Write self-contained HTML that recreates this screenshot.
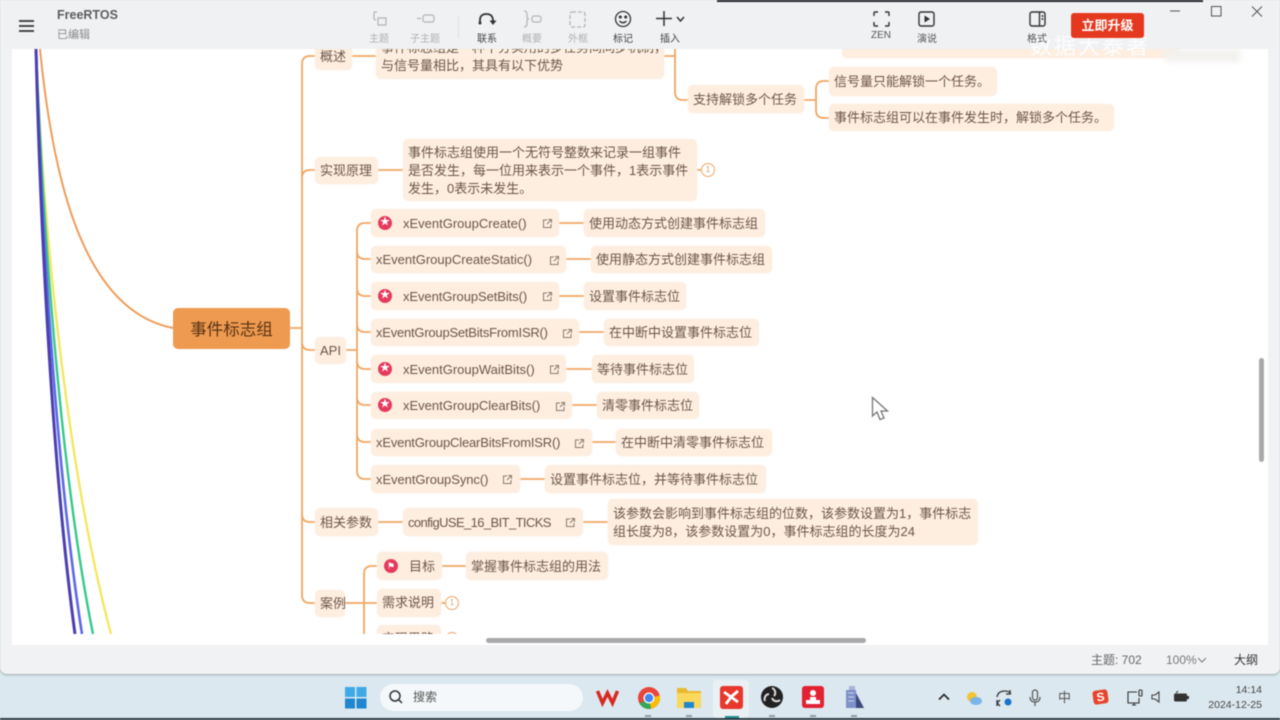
<!DOCTYPE html>
<html lang="zh"><head><meta charset="utf-8"><title>FreeRTOS</title>
<style>
*{box-sizing:border-box;margin:0;padding:0}
html,body{width:1280px;height:720px;overflow:hidden;background:#dbe8ef;font-family:"Liberation Sans","Noto Sans CJK SC",sans-serif}
body{filter:blur(.4px)}
.abs,.n,.t,.tb,.c{position:absolute}
#win{position:absolute;left:0;top:0;width:1280px;height:674px;background:#f1f2f4;border-radius:0 0 7px 7px;box-shadow:0 1px 2px #9aa;overflow:hidden}
#canvas{position:absolute;left:12px;top:49px;width:1256px;height:585px;background:#fff;overflow:hidden}
#white2{position:absolute;left:12px;top:634px;width:1256px;height:11px;background:#fff}
#stage{position:absolute;left:-12px;top:-49px;width:1280px;height:720px}
.n{background:#fdeee0;border-radius:5px;color:#6d5648;font-size:13px;white-space:nowrap;padding-left:5px;box-shadow:0 0 2px #fdf3ea}
.t{white-space:nowrap;color:#777;font-size:10px;text-align:center}
.c{width:14px;height:14px;border:1px solid #f0a560;border-radius:50%;background:#fff;color:#e79a5a;font-size:8px;line-height:12px;text-align:center}
svg{position:absolute;overflow:visible}
.star{position:absolute;width:14px;height:14px;border-radius:50%;background:#e63a5c;color:#fff;font-size:10px;line-height:14px;text-align:center}
.lk{position:absolute;width:11px;height:11px;top:50%;margin-top:-5px}
</style></head><body>
<div id="win">
<div id="canvas"><div id="stage">
<svg width="1280" height="720" style="left:0;top:0" fill="none">
<path d="M36 49C44 250 70 480 111 634" stroke="#f5e663" stroke-width="2.4"/>
<path d="M36 49C44 250 62 480 93 634" stroke="#35c98a" stroke-width="2.4"/>
<path d="M36 49C42 250 58 480 82 634" stroke="#5d68e8" stroke-width="2.6"/>
<path d="M36 49C41 250 54 480 75 634" stroke="#4a3fb0" stroke-width="3"/>
<path d="M40 49C52 170 80 310 173 328" stroke="#ee9d5a" stroke-width="2"/>
<g stroke="#f0a661" stroke-width="1.8">
<path d="M290 328H302M315 56H310Q302 56 302 64V595Q302 603 310 603H315M315 170H310Q302 170 302 178M302 342Q302 350 310 350H315M302 514Q302 522 310 522H315"/>
<path d="M352 56H376M664 56H675V92Q675 100 683 100H688M675 56V49"/>
<path d="M804 100H816M829 81H824Q816 81 816 89V110Q816 118 824 118H829"/>
<path d="M378 170H403M697 170H701"/>
<path d="M346 350H357M371 223H365Q357 223 357 231V471Q357 479 365 479H371M357 251Q357 259 365 259H371M357 288Q357 296 365 296H371M357 324Q357 332 365 332H371M357 361Q357 369 365 369H371M357 397Q357 405 365 405H371M357 434Q357 442 365 442H371"/>
<path d="M559 223H584M566 259H591M559 296H584M579 332H605M566 369H592M572 405H597M592 442H616M520 479H545"/>
<path d="M378 522H403M583 522H608"/>
<path d="M345 603H377M377 566H372Q364 566 364 574V634M442 566H466M441 603H445"/>
</g>
</svg>
<div class="n" style="left:842px;top:40px;width:338px;height:18px;line-height:14px;padding-left:6px;font-size:12px;color:#a08c7e"></div>
<div class="n" style="left:315px;top:43px;width:37px;height:27px;line-height:27px">概述</div>
<div class="n" style="left:376px;top:35px;width:288px;height:44px;line-height:18px;padding-top:4px">事件标志组是一种十分实用的多任务间同步机制，<br>与信号量相比，其具有以下优势</div>
<div class="n" style="left:688px;top:85px;width:116px;height:28px;line-height:30px">支持解锁多个任务</div>
<div class="n" style="left:829px;top:67px;width:168px;height:29px;line-height:29px">信号量只能解锁一个任务。</div>
<div class="n" style="left:829px;top:104px;width:285px;height:27px;line-height:27px">事件标志组可以在事件发生时，解锁多个任务。</div>
<div class="n" style="left:315px;top:157px;width:63px;height:27px;line-height:27px">实现原理</div>
<div class="n" style="left:403px;top:139px;width:294px;height:62px;line-height:18px;padding-top:5px">事件标志组使用一个无符号整数来记录一组事件<br>是否发生，每一位用来表示一个事件，1表示事件<br>发生，0表示未发生。</div>
<div class="c" style="left:701px;top:163px">1</div>
<div class="n" style="left:173px;top:308px;width:117px;height:41px;line-height:44px;background:#ee9a50;color:#5a3213;font-size:16.5px;text-align:center;padding:0;box-shadow:none">事件标志组</div>
<div class="n" style="left:315px;top:337px;width:31px;height:27px;line-height:27px">API</div>

<div class="n" style="left:371px;top:209px;width:188px;height:28px;line-height:30px;padding-left:32px">xEventGroupCreate()<div class="star" style="left:7px;top:7px">★</div><svg class="lk" style="left:171px" viewBox="0 0 11 11" fill="none" stroke="#8a7a70"><path d="M5 2H1.500V9.500H9V6M6 1.500H9.500V5M9.500 1.500L5 6"/></svg></div>
<div class="n" style="left:371px;top:246px;width:195px;height:27px;line-height:27px">xEventGroupCreateStatic()<svg class="lk" style="left:178px" viewBox="0 0 11 11" fill="none" stroke="#8a7a70"><path d="M5 2H1.500V9.500H9V6M6 1.500H9.500V5M9.500 1.500L5 6"/></svg></div>
<div class="n" style="left:371px;top:282px;width:188px;height:28px;line-height:30px;padding-left:32px;letter-spacing:-.08px">xEventGroupSetBits()<div class="star" style="left:7px;top:7px">★</div><svg class="lk" style="left:171px" viewBox="0 0 11 11" fill="none" stroke="#8a7a70"><path d="M5 2H1.500V9.500H9V6M6 1.500H9.500V5M9.500 1.500L5 6"/></svg></div>
<div class="n" style="left:371px;top:319px;width:208px;height:27px;line-height:27px;letter-spacing:-.22px">xEventGroupSetBitsFromISR()<svg class="lk" style="left:191px" viewBox="0 0 11 11" fill="none" stroke="#8a7a70"><path d="M5 2H1.500V9.500H9V6M6 1.500H9.500V5M9.500 1.500L5 6"/></svg></div>
<div class="n" style="left:371px;top:355px;width:195px;height:28px;line-height:30px;padding-left:32px">xEventGroupWaitBits()<div class="star" style="left:7px;top:7px">★</div><svg class="lk" style="left:178px" viewBox="0 0 11 11" fill="none" stroke="#8a7a70"><path d="M5 2H1.500V9.500H9V6M6 1.500H9.500V5M9.500 1.500L5 6"/></svg></div>
<div class="n" style="left:371px;top:392px;width:201px;height:27px;line-height:28px;padding-left:32px">xEventGroupClearBits()<div class="star" style="left:7px;top:6px">★</div><svg class="lk" style="left:184px" viewBox="0 0 11 11" fill="none" stroke="#8a7a70"><path d="M5 2H1.500V9.500H9V6M6 1.500H9.500V5M9.500 1.500L5 6"/></svg></div>
<div class="n" style="left:371px;top:429px;width:221px;height:27px;line-height:27px;letter-spacing:-.17px">xEventGroupClearBitsFromISR()<svg class="lk" style="left:203px" viewBox="0 0 11 11" fill="none" stroke="#8a7a70"><path d="M5 2H1.500V9.500H9V6M6 1.500H9.500V5M9.500 1.500L5 6"/></svg></div>
<div class="n" style="left:371px;top:465px;width:149px;height:28px;line-height:30px;letter-spacing:-.06px">xEventGroupSync()<svg class="lk" style="left:131px" viewBox="0 0 11 11" fill="none" stroke="#8a7a70"><path d="M5 2H1.500V9.500H9V6M6 1.500H9.500V5M9.500 1.500L5 6"/></svg></div>

<div class="n" style="left:584px;top:209px;width:181px;height:28px;line-height:30px">使用动态方式创建事件标志组</div>
<div class="n" style="left:591px;top:246px;width:181px;height:27px;line-height:27px">使用静态方式创建事件标志组</div>
<div class="n" style="left:584px;top:282px;width:102px;height:28px;line-height:30px">设置事件标志位</div>
<div class="n" style="left:604px;top:319px;width:155px;height:27px;line-height:27px">在中断中设置事件标志位</div>
<div class="n" style="left:592px;top:355px;width:102px;height:28px;line-height:30px">等待事件标志位</div>
<div class="n" style="left:597px;top:392px;width:102px;height:27px;line-height:28px">清零事件标志位</div>
<div class="n" style="left:616px;top:429px;width:156px;height:27px;line-height:27px">在中断中清零事件标志位</div>
<div class="n" style="left:545px;top:465px;width:221px;height:28px;line-height:30px">设置事件标志位，并等待事件标志位</div>

<div class="n" style="left:315px;top:508px;width:63px;height:28px;line-height:30px">相关参数</div>
<div class="n" style="left:403px;top:508px;width:180px;height:28px;line-height:30px;letter-spacing:-.6px">configUSE_16_BIT_TICKS<svg class="lk" style="left:162px" viewBox="0 0 11 11" fill="none" stroke="#8a7a70"><path d="M5 2H1.500V9.500H9V6M6 1.500H9.500V5M9.500 1.500L5 6"/></svg></div>
<div class="n" style="left:608px;top:499px;width:370px;height:46px;line-height:18px;padding-top:6px">该参数会影响到事件标志组的位数，该参数设置为1，事件标志<br>组长度为8，该参数设置为0，事件标志组的长度为24</div>
<div class="n" style="left:315px;top:590px;width:30px;height:27px;line-height:27px">案例</div>
<div class="n" style="left:377px;top:552px;width:65px;height:28px;line-height:29px;padding-left:32px">目标<div class="star" style="left:7px;top:7px;font-size:9px">⚑</div></div>
<div class="n" style="left:466px;top:552px;width:142px;height:28px;line-height:29px">掌握事件标志组的用法</div>
<div class="n" style="left:377px;top:589px;width:64px;height:28px;line-height:28px">需求说明</div>
<div class="c" style="left:445px;top:596px">1</div>
<div class="n" style="left:377px;top:625px;width:64px;height:28px;line-height:28px">实现思路</div>
<div class="c" style="left:445px;top:632px">1</div>
<svg width="20" height="26" style="left:871px;top:396px" viewBox="0 0 20 26"><path d="M1.500 1.500V20L6 16L9 23.500L13 22L10 15H16.500Z" fill="#fff" stroke="#77777b" stroke-width="1.300"/></svg>
</div></div>
<div id="white2"></div>
<div class="abs" style="left:486px;top:638px;width:380px;height:5px;background:#a9a9ab;border-radius:3px"></div>
<div class="abs" style="left:1259px;top:358px;width:5px;height:104px;background:#a9a9ab;border-radius:3px"></div>
<div class="abs" style="left:0;top:0;width:1280px;height:49px;background:#f0f1f3"></div>
<div class="abs" style="left:717px;top:0;width:486px;height:2px;background:#22242a"></div>
<div class="abs" style="left:842px;top:49px;width:190px;height:9px;background:#fdeee0;border-radius:0 0 5px 5px"></div>
<div class="abs" style="left:1165px;top:49px;width:75px;height:13px;background:#f3f1ee;filter:blur(3px)"></div>
<div class="abs" style="left:1030px;top:33px;color:#fff;font-size:22px;letter-spacing:2px;white-space:nowrap;height:28px;line-height:28px;opacity:.9">数据大泰著</div>

<svg width="16" height="12" style="left:19px;top:20px" stroke="#333" stroke-width="1.700"><path d="M0 1H15M0 6H15M0 11H15"/></svg>
<div class="abs" style="left:57px;top:8px;font-size:12.500px;color:#444;line-height:15px;font-weight:bold;opacity:.85">FreeRTOS</div>
<div class="abs" style="left:57px;top:28px;font-size:11px;color:#888;line-height:14px">已编辑</div>

<svg width="16" height="16" style="left:372px;top:11px" fill="none" stroke="#b4b4b8" stroke-width="1.200"><path d="M2 1V7Q2 9 4 9M6 7H14V14H6ZM2 1H5"/></svg>
<div class="t" style="left:364px;top:30px;width:30px;color:#b0b0b4">主题</div>
<svg width="20" height="12" style="left:416px;top:13px" fill="none" stroke="#b4b4b8" stroke-width="1.200"><rect x="7" y="2" width="11" height="7" rx="2"/><path d="M1 5.500H5"/></svg>
<div class="t" style="left:405px;top:30px;width:40px;color:#b0b0b4">子主题</div>
<div class="abs" style="left:458px;top:16px;width:1px;height:22px;background:#dfdfe2"></div>
<svg width="20" height="16" style="left:477px;top:11px" fill="none" stroke="#333" stroke-width="1.800"><path d="M3 12V9Q3 3 9.500 3Q16 3 16 10"/><path d="M12.500 9.500H19.500L16 14Z" fill="#333" stroke="none"/><circle cx="3" cy="12" r="1.500" fill="#333" stroke="none"/></svg>
<div class="t" style="left:472px;top:30px;width:30px;color:#444">联系</div>
<svg width="20" height="18" style="left:523px;top:10px" fill="none" stroke="#b4b4b8" stroke-width="1.200"><path d="M1 1Q4 1 4 4V7Q4 9 6 9Q4 9 4 11V14Q4 17 1 17"/><rect x="9" y="6" width="9" height="6" rx="2"/></svg>
<div class="t" style="left:517px;top:30px;width:30px;color:#b0b0b4">概要</div>
<svg width="18" height="17" style="left:569px;top:11px" fill="none" stroke="#b4b4b8" stroke-width="1.300" stroke-dasharray="4 2"><rect x="1" y="1" width="15" height="15" rx="2"/></svg>
<div class="t" style="left:563px;top:30px;width:30px;color:#b0b0b4">外框</div>
<svg width="18" height="18" style="left:614px;top:10px" fill="none" stroke="#333" stroke-width="1.300"><circle cx="9" cy="9" r="7.500"/><circle cx="6.300" cy="7" r=".9" fill="#333"/><circle cx="11.700" cy="7" r=".9" fill="#333"/><path d="M5.500 11Q9 14.500 12.500 11"/></svg>
<div class="t" style="left:608px;top:30px;width:30px;color:#444">标记</div>
<svg width="30" height="16" style="left:656px;top:11px" fill="none" stroke="#333" stroke-width="1.500"><path d="M8 0V15M0 7.500H16"/><path d="M21 6L24.500 10L28 6"/></svg>
<div class="t" style="left:655px;top:30px;width:30px;color:#444">插入</div>

<svg width="18" height="16" style="left:873px;top:11px" fill="none" stroke="#333" stroke-width="1.400"><path d="M1 5V2Q1 1 2 1H5M12 1H15Q16 1 16 2V5M16 11V14Q16 15 15 15H12M5 15H2Q1 15 1 14V11"/></svg>
<div class="t" style="left:866px;top:30px;width:30px;color:#555">ZEN</div>
<svg width="18" height="16" style="left:918px;top:11px" fill="none" stroke="#333" stroke-width="1.400"><rect x="1" y="1" width="15" height="14" rx="2"/><path d="M6.500 4.500L12 8L6.500 11.500Z" fill="#333" stroke="none"/></svg>
<div class="t" style="left:912px;top:30px;width:30px;color:#555">演说</div>
<svg width="18" height="16" style="left:1029px;top:11px" fill="none" stroke="#333" stroke-width="1.400"><rect x="1" y="1" width="15" height="14" rx="2"/><path d="M10.500 1V15M12.500 5H14.500M12.500 8H14.500"/></svg>
<div class="t" style="left:1022px;top:30px;width:30px;color:#555">格式</div>
<div class="abs" style="left:1071px;top:13px;width:73px;height:25px;background:#e5391f;border-radius:3px;color:#fff;font-size:13px;font-weight:bold;text-align:center;line-height:26px">立即升级</div>
<svg width="100" height="14" style="left:1170px;top:5px" fill="none" stroke="#555" stroke-width="1"><path d="M0 6H10M41.500 1.500H51V11H41.500ZM82 1.500L92 11.500M92 1.500L82 11.500"/></svg>

<div class="t" style="left:1091px;top:653px;font-size:12px;color:#666;line-height:15px">主题: 702</div>
<div class="t" style="left:1166px;top:653px;font-size:12px;color:#777;line-height:15px">100%</div>
<svg width="10" height="6" style="left:1197px;top:657px" fill="none" stroke="#777"><path d="M1 1L5 5L9 1"/></svg>
<div class="t" style="left:1234px;top:653px;font-size:12px;color:#333;line-height:15px">大纲</div>
</div>

<div class="abs" style="left:0;top:718px;width:1280px;height:2px;background:#2b3b42"></div>
<svg width="22" height="22" style="left:345px;top:687px"><path d="M0 0H10V10H0Z" fill="#3fa9e6"/><path d="M11.500 0H21.500V10H11.500Z" fill="#3fa9e6"/><path d="M0 11.500H10V21.500H0Z" fill="#1f86cf"/><path d="M11.500 11.500H21.500V21.500H11.500Z" fill="#1f86cf"/></svg>
<div class="abs" style="left:380px;top:684px;width:203px;height:27px;background:#f4f8fa;border-radius:14px"></div>
<svg width="16" height="16" style="left:388px;top:689px" fill="none" stroke="#333" stroke-width="1.500"><circle cx="7" cy="7" r="5"/><path d="M10.500 10.500L14 14"/></svg>
<div class="abs" style="left:413px;top:689px;font-size:12px;color:#555;line-height:16px">搜索</div>
<svg width="24" height="18" style="left:596px;top:688px" fill="none" stroke="#d9291f" stroke-width="3.500"><path d="M1.500 3L6.500 15L11.500 5L16.500 15L21.500 3"/></svg>
<svg width="24" height="24" style="left:637px;top:686px"><circle cx="12" cy="12" r="11" fill="#e8453c"/><path d="M12 12L2.500 17.500A11 11 0 0 0 14 22.800Z" fill="#34a853"/><path d="M12 12L14 22.800A11 11 0 0 0 22.800 9.500Z" fill="#fbbc05"/><circle cx="12" cy="12" r="5.500" fill="#fff"/><circle cx="12" cy="12" r="4.200" fill="#4285f4"/></svg>
<svg width="24" height="22" style="left:677px;top:687px"><path d="M0 1H9L11 4H24V20H0Z" fill="#e8b92e"/><path d="M0 6H24V21H0Z" fill="#fbd75b"/><path d="M7 15H17V21H7Z" fill="#1f86cf"/></svg>
<div class="abs" style="left:713px;top:680px;width:36px;height:38px;background:#e9f1f5;border-radius:4px"></div>
<div class="abs" style="left:720px;top:686px;width:23px;height:23px;background:#e8382c;border-radius:3px"></div>
<svg width="23" height="23" style="left:720px;top:686px" fill="none" stroke="#fff" stroke-width="2.800"><path d="M4 6L11 11L18 5M6 18L11 11L18 16"/></svg>
<div class="abs" style="left:725px;top:716px;width:14px;height:2px;background:#1f8f8f"></div>
<svg width="24" height="24" style="left:760px;top:685px"><circle cx="12" cy="12" r="11" fill="#222"/><path d="M12 3A5 5 0 0 1 14 11M20 15A5 5 0 0 1 12 13M5 16A5 5 0 0 1 9 9" fill="none" stroke="#ddd" stroke-width="2"/></svg>
<div class="abs" style="left:802px;top:686px;width:22px;height:22px;background:#e22133;border-radius:3px"></div>
<svg width="14" height="16" style="left:806px;top:689px" fill="#fff"><circle cx="7" cy="4" r="3"/><path d="M4 8H10V11H14V15H0V11H4Z"/></svg>
<svg width="22" height="24" style="left:843px;top:685px"><path d="M3 5H13V23H3Z" fill="#7f8fc9"/><path d="M6 1H12V5H6Z" fill="#a9b4d8"/><path d="M13 8L21 23H13Z" fill="#3c4a78"/><path d="M5 8H11M5 12H11M5 16H11" stroke="#c9d2e8"/></svg>
<svg width="240" height="4" style="left:620px;top:715px" fill="#8e9ca4"><rect x="25" y="0" width="6" height="2"/><rect x="66" y="0" width="6" height="2"/><rect x="149" y="0" width="6" height="2"/><rect x="190" y="0" width="6" height="2"/><rect x="231" y="0" width="6" height="2"/></svg>

<svg width="12" height="8" style="left:938px;top:693px" fill="none" stroke="#222" stroke-width="1.600"><path d="M1 6.500L6 1.500L11 6.500"/></svg>
<svg width="16" height="14" style="left:966px;top:691px"><circle cx="6" cy="6" r="5" fill="#f4c430"/><ellipse cx="10" cy="10" rx="6" ry="4" fill="#7ab5e8"/></svg>
<svg width="18" height="18" style="left:996px;top:689px" fill="none" stroke="#333" stroke-width="1.300"><path d="M1 8Q2 2 9 2Q13 2 15 5M14 1V5H10M1 11V17M1 14L4 11M1 14L4 17"/><circle cx="12" cy="13" r="3.500" fill="#1a73c9" stroke="none"/></svg>
<svg width="12" height="18" style="left:1029px;top:689px" fill="none" stroke="#555" stroke-width="1.200"><rect x="3.500" y="1" width="5" height="10" rx="2.500"/><path d="M1 8Q1 13 6 13Q11 13 11 8M6 13V17"/></svg>
<div class="abs" style="left:1058px;top:690px;font-size:13px;color:#555;line-height:15px">中</div>
<div class="abs" style="left:1093px;top:690px;width:15px;height:14px;background:#e8432c;border-radius:3px;color:#fff;font-size:12px;font-weight:bold;line-height:14px;text-align:center;transform:rotate(-8deg)">S</div>
<svg width="17" height="17" style="left:1127px;top:689px" fill="none" stroke="#333" stroke-width="1.100"><path d="M10 3H1V14H12V9M5 16H9M7 14V16"/><rect x="12" y="1" width="3" height="6" rx="1"/></svg>
<svg width="12" height="14" style="left:1151px;top:690px" fill="none" stroke="#444" stroke-width="1.100"><path d="M1 5V9H4L8 12V2L4 5Z"/></svg>
<svg width="16" height="12" style="left:1173px;top:691px"><rect x="1" y="2.500" width="13" height="8" rx="1.500" fill="#333"/><rect x="14" y="5" width="2" height="3" fill="#333"/><path d="M3 2L5 0" stroke="#333"/></svg>
<div class="t" style="left:1200px;top:683px;width:62px;text-align:right;font-size:10.500px;color:#444;line-height:14px">14:14</div>
<div class="t" style="left:1190px;top:698px;width:72px;text-align:right;font-size:10.500px;color:#444;line-height:14px">2024-12-25</div>
</body></html>
